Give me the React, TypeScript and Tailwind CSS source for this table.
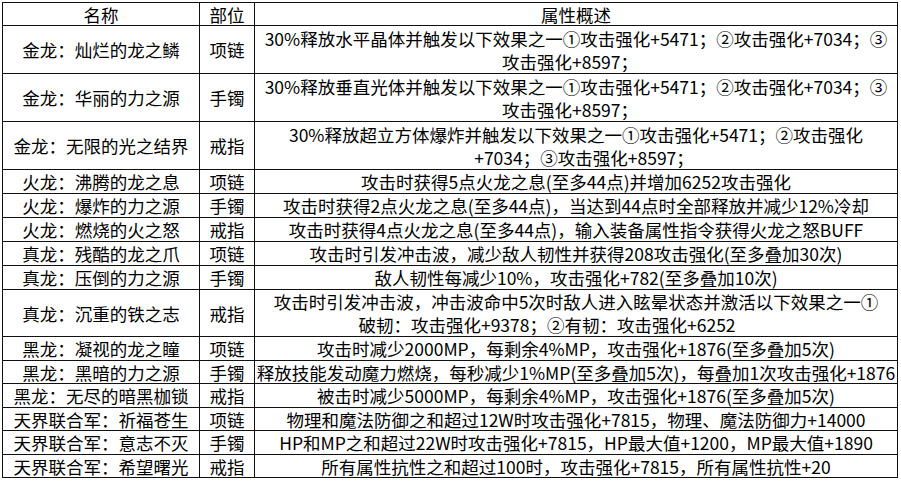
type Row = {
  name: string;
  part: string;
  lines: { text: string; cls?: string }[];
  h: string;
};

const rows: Row[] = [
  {
    name: '金龙：灿烂的龙之鳞',
    part: '项链',
    h: 'h-[48px]',
    lines: [
      { text: '30%释放水平晶体并触发以下效果之一①攻击强化+5471；②攻击强化+7034；③' },
      { text: '攻击强化+8597；', cls: 'pr-[12px]' },
    ],
  },
  {
    name: '金龙：华丽的力之源',
    part: '手镯',
    h: 'h-[48px]',
    lines: [
      { text: '30%释放垂直光体并触发以下效果之一①攻击强化+5471；②攻击强化+7034；③' },
      { text: '攻击强化+8597；', cls: 'pr-[12px]' },
    ],
  },
  {
    name: '金龙：无限的光之结界',
    part: '戒指',
    h: 'h-[48px]',
    lines: [
      { text: '30%释放超立方体爆炸并触发以下效果之一①攻击强化+5471；②攻击强化' },
      { text: '+7034；③攻击强化+8597；', cls: 'pl-[16px]' },
    ],
  },
  { name: '火龙：沸腾的龙之息', part: '项链', h: 'h-[24px]', lines: [{ text: '攻击时获得5点火龙之息(至多44点)并增加6252攻击强化' }] },
  { name: '火龙：爆炸的力之源', part: '手镯', h: 'h-[24px]', lines: [{ text: '攻击时获得2点火龙之息(至多44点)，当达到44点时全部释放并减少12%冷却' }] },
  { name: '火龙：燃烧的火之怒', part: '戒指', h: 'h-[24px]', lines: [{ text: '攻击时获得4点火龙之息(至多44点)，输入装备属性指令获得火龙之怒BUFF' }] },
  { name: '真龙：残酷的龙之爪', part: '项链', h: 'h-[24px]', lines: [{ text: '攻击时引发冲击波，减少敌人韧性并获得208攻击强化(至多叠加30次)' }] },
  { name: '真龙：压倒的力之源', part: '手镯', h: 'h-[24px]', lines: [{ text: '敌人韧性每减少10%，攻击强化+782(至多叠加10次)' }] },
  {
    name: '真龙：沉重的铁之志',
    part: '戒指',
    h: 'h-[47px]',
    lines: [
      { text: '攻击时引发冲击波，冲击波命中5次时敌人进入眩晕状态并激活以下效果之一①' },
      { text: '破韧：攻击强化+9378；②有韧：攻击强化+6252', cls: 'pr-[58px]' },
    ],
  },
  { name: '黑龙：凝视的龙之瞳', part: '项链', h: 'h-[24px]', lines: [{ text: '攻击时减少2000MP，每剩余4%MP，攻击强化+1876(至多叠加5次)' }] },
  { name: '黑龙：黑暗的力之源', part: '手镯', h: 'h-[23px]', lines: [{ text: '释放技能发动魔力燃烧，每秒减少1%MP(至多叠加5次)，每叠加1次攻击强化+1876' }] },
  { name: '黑龙：无尽的暗黑枷锁', part: '戒指', h: 'h-[24px]', lines: [{ text: '被击时减少5000MP，每剩余4%MP，攻击强化+1876(至多叠加5次)' }] },
  { name: '天界联合军：祈福苍生', part: '项链', h: 'h-[23px]', lines: [{ text: '物理和魔法防御之和超过12W时攻击强化+7815，物理、魔法防御力+14000' }] },
  { name: '天界联合军：意志不灭', part: '手镯', h: 'h-[24px]', lines: [{ text: 'HP和MP之和超过22W时攻击强化+7815，HP最大值+1200，MP最大值+1890' }] },
  { name: '天界联合军：希望曙光', part: '戒指', h: 'h-[23px]', lines: [{ text: '所有属性抗性之和超过100时，攻击强化+7815，所有属性抗性+20' }] },
];

export default function App() {
  return (
    <div className="w-[901px] h-[483px] bg-white pt-[2px] pl-[2px] font-['Noto_Sans_CJK_SC','Noto_Sans',sans-serif] text-[17.5px] leading-[23px] text-black">
      <div className="w-[896px] border-l border-t border-[#111]">
        {/* 表头 */}
        <div className="flex h-[23px] border-b border-[#111]">
          <div className="w-[197px] border-r border-[#111] flex items-center justify-center">名称</div>
          <div className="w-[55px] border-r border-[#111] flex items-center justify-center">部位</div>
          <div className="w-[643px] border-r border-[#111] flex items-center justify-center">属性概述</div>
        </div>

        {rows.map((row, i) => (
          <div key={i} className={`flex border-b border-[#111] ${row.h}`}>
            <div className="w-[197px] border-r border-[#111] flex items-center justify-center whitespace-nowrap">
              {row.name}
            </div>
            <div className="w-[55px] border-r border-[#111] flex items-center justify-center whitespace-nowrap">
              {row.part}
            </div>
            <div className="w-[643px] border-r border-[#111] flex flex-col items-center justify-center whitespace-nowrap">
              {row.lines.map((l, j) => (
                <div key={j} className={l.cls}>
                  {l.text}
                </div>
              ))}
            </div>
          </div>
        ))}
      </div>
    </div>
  );
}
